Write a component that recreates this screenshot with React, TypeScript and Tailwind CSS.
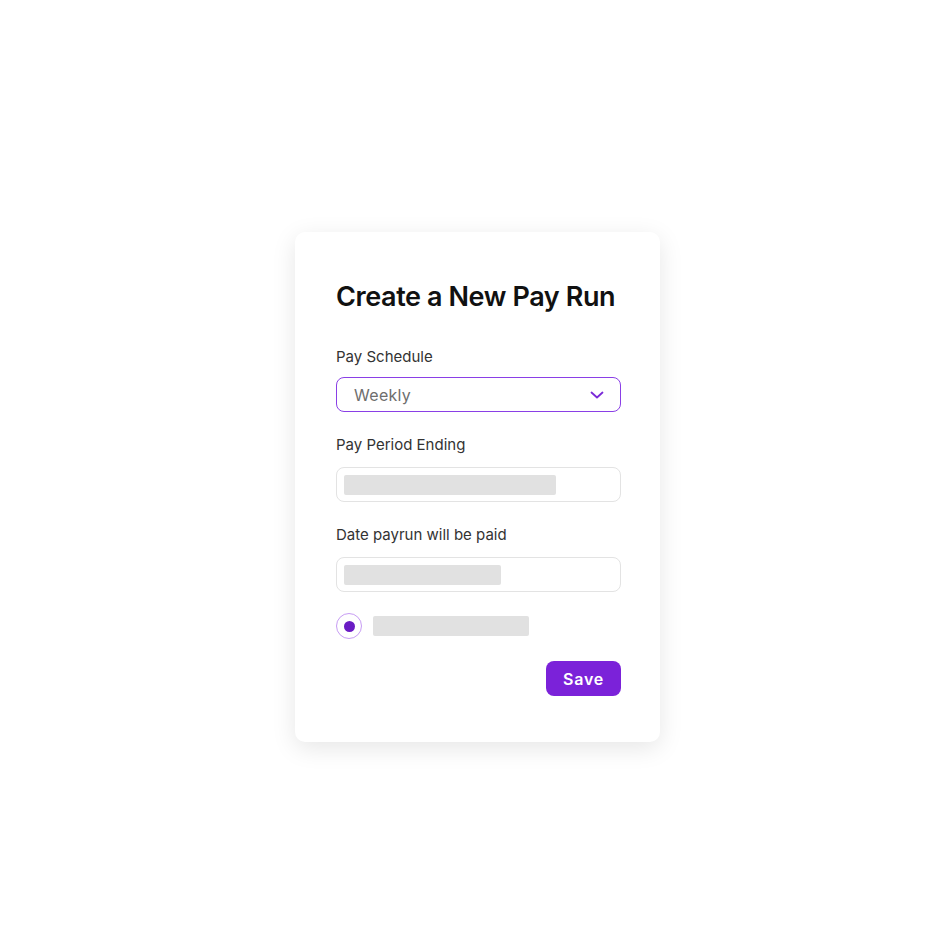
import React from "react";

export default function App() {
  return (
    <div
      className="w-[936px] h-[936px] bg-white flex items-start justify-start pl-[295px] pt-[232px]"
      style={{ fontFamily: "Inter, 'Noto Sans', sans-serif" }}
    >
      <div className="w-[365px] h-[510px] bg-white rounded-[10px] shadow-[0_6px_24px_rgba(0,0,0,0.10)] pl-[41px] pr-[39px] pt-[48px] flex flex-col">
        <h1 className="text-[27px] leading-[34px] font-semibold text-[#111] tracking-[-0.4px]">
          Create a New Pay Run
        </h1>

        <label className="mt-[33px] text-[15px] leading-[20px] text-[#333]">Pay Schedule</label>
        <div className="mt-[10px] h-[35px] w-[285px] rounded-[8px] border border-[#8a3fe6] flex items-center justify-between pl-[17px] pr-[16px]">
          <span className="text-[16px] text-[#6e6e6e] tracking-[0.3px]">Weekly</span>
          <svg width="14" height="8" viewBox="0 0 14 8" fill="none">
            <path d="M1.5 1.5 L7 6.5 L12.5 1.5" stroke="#7a2ad8" strokeWidth="1.8" strokeLinecap="round" strokeLinejoin="round" />
          </svg>
        </div>

        <label className="mt-[23px] text-[15px] leading-[20px] text-[#333]">Pay Period Ending</label>
        <div className="mt-[12px] h-[35px] w-[285px] rounded-[8px] border border-[#e3e3e3] flex items-center pl-[7px]">
          <div className="h-[20px] w-[212px] rounded-[2px] bg-[#e1e1e1]" />
        </div>

        <label className="mt-[23px] text-[15px] leading-[20px] text-[#333]">Date payrun will be paid</label>
        <div className="mt-[12px] h-[35px] w-[285px] rounded-[8px] border border-[#e3e3e3] flex items-center pl-[7px]">
          <div className="h-[20px] w-[157px] rounded-[2px] bg-[#e1e1e1]" />
        </div>

        <div className="mt-[21px] flex items-center gap-[11px]">
          <div className="w-[26px] h-[26px] rounded-full border border-[#c79cf4] flex items-center justify-center">
            <div className="w-[11px] h-[11px] rounded-full bg-[#6a1cc4]" />
          </div>
          <div className="h-[20px] w-[156px] rounded-[2px] bg-[#e1e1e1]" />
        </div>

        <div className="mt-[22px] flex justify-end w-[285px]">
          <button className="h-[35px] w-[75px] rounded-[8px] bg-[#7b22d9] text-white text-[16px] font-semibold tracking-[0.8px]">
            Save
          </button>
        </div>
      </div>
    </div>
  );
}
